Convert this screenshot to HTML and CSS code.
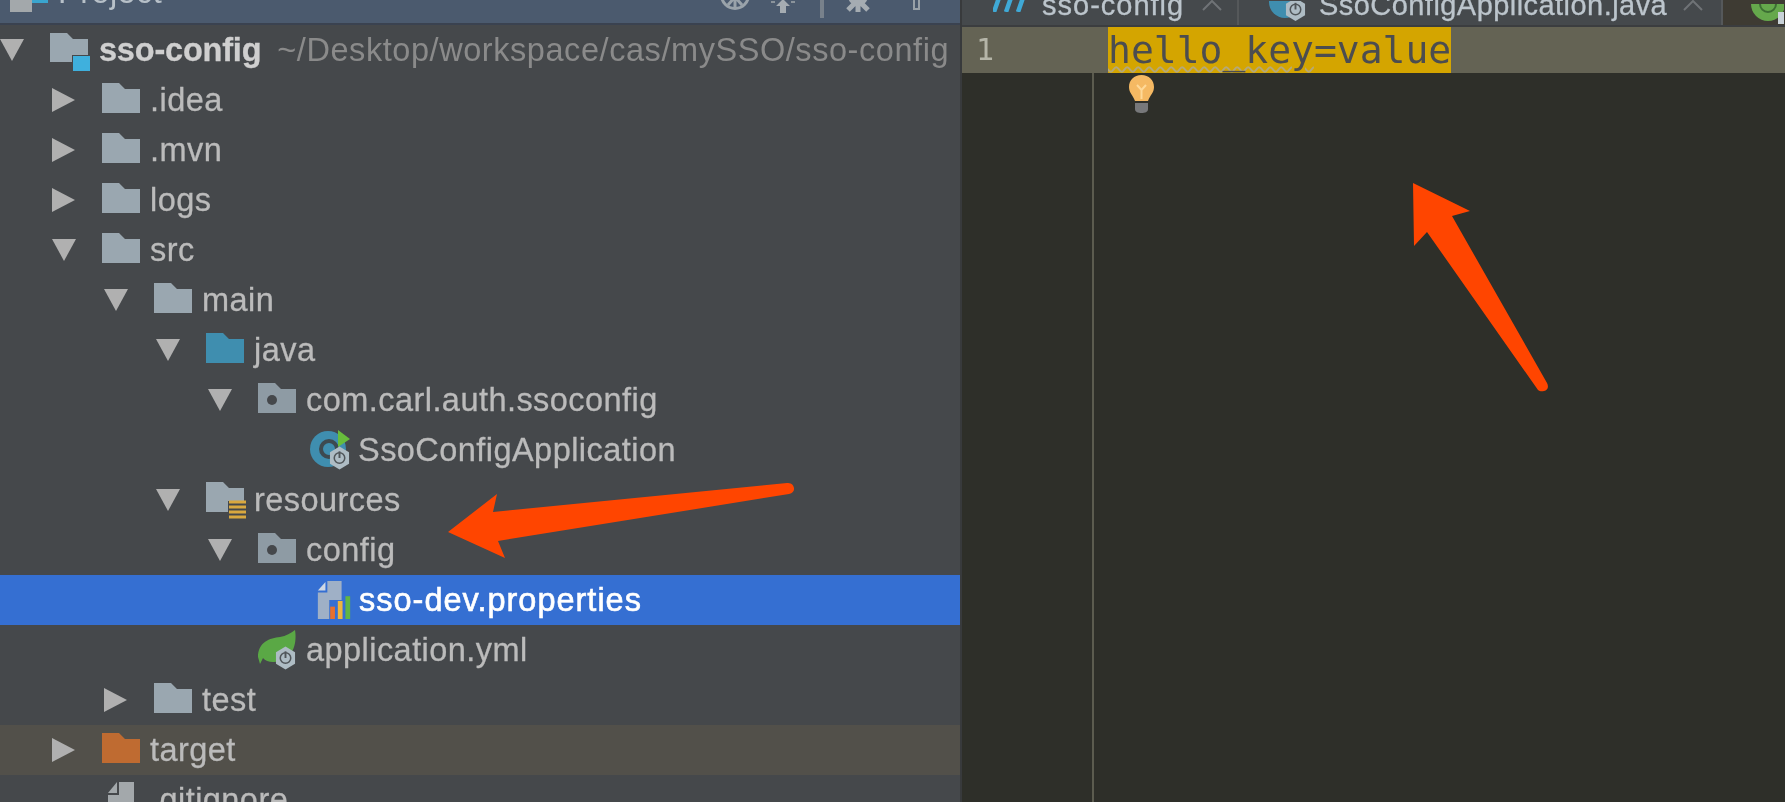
FILE: index.html
```html
<!DOCTYPE html>
<html lang="en">
<head>
<meta charset="utf-8">
<title>sso-config</title>
<link rel="stylesheet" href="styles.css">
</head>
<body>
<svg class="defs" width="0" height="0" aria-hidden="true">
  <defs>
    <symbol id="folder" viewBox="0 0 38 30"><path d="M0 0H17L23 6H38V30H0Z" fill="currentColor"/></symbol>
    <symbol id="right" viewBox="0 0 23 24"><path d="M0 0L23 12L0 24Z" fill="#b0b0b0"/></symbol>
    <symbol id="down" viewBox="0 0 24 22"><path d="M0 0H24L12 22Z" fill="#b0b0b0"/></symbol>
    <symbol id="boot" viewBox="0 0 22 24"><path d="M11 0L21 6V18L11 24L1 18V6Z" fill="#aebcc4"/><circle cx="11" cy="12" r="5.5" fill="none" stroke="#50565a" stroke-width="1.6"/><path d="M11 5V12" stroke="#50565a" stroke-width="2"/></symbol>
  </defs>
</svg>
<div class="app">
  <aside class="sidebar">
    <header class="panel-head">
      <svg class="proj-icon" viewBox="0 0 38 30"><path d="M0 0H22V30H0Z" fill="#a3a8ab"/><path d="M6 8H16M6 15H16" stroke="#555" stroke-width="3"/><path d="M22 17H38V21H22Z" fill="#3aa5cf"/></svg>
      <span class="panel-title">Project</span>
      <span class="head-tools">
        <svg class="tool-target" viewBox="0 0 30 30"><circle cx="15" cy="13" r="13.5" fill="none" stroke="#9aa3aa" stroke-width="3"/><path d="M15 8V27M15 15L8 23M15 15L22 23" stroke="#9aa3aa" stroke-width="3" fill="none"/></svg>
        <svg class="tool-expand" viewBox="0 0 28 22"><path d="M14 8L21 15H17V22H11V15H7Z" fill="#a5acb2"/><path d="M2 11H6M22 11H26" stroke="#8a939b" stroke-width="2"/></svg>
        <span class="tool-sep"></span>
        <svg class="tool-gear" viewBox="0 0 28 22"><circle cx="14" cy="6" r="10" fill="#a5acb2"/><path d="M14 0V22M4 0L24 20M24 0L4 20" stroke="#a5acb2" stroke-width="5"/></svg>
        <span class="tool-pin"></span>
      </span>
    </header>
    <div class="tree">
      <div class="row l0">
        <span class="twisty"><svg class="tw-down"><use href="#down"/></svg></span>
        <span class="icon"><svg class="ic-root" viewBox="0 0 40 38"><path d="M0 0H17L23 6H38V29H0Z" fill="#9aa7b0"/><path d="M22 22H40V38H22Z" fill="#45484b"/><path d="M23 23H40V38H23Z" fill="#3fb0dd"/></svg></span>
        <span class="label strong">sso-config</span><span class="path">~/Desktop/workspace/cas/mySSO/sso-config</span>
      </div>
      <div class="row l1">
        <span class="twisty"><svg class="tw-right"><use href="#right"/></svg></span>
        <span class="icon"><svg class="ic-folder c-grey"><use href="#folder"/></svg></span>
        <span class="label">.idea</span>
      </div>
      <div class="row l1">
        <span class="twisty"><svg class="tw-right"><use href="#right"/></svg></span>
        <span class="icon"><svg class="ic-folder c-grey"><use href="#folder"/></svg></span>
        <span class="label">.mvn</span>
      </div>
      <div class="row l1">
        <span class="twisty"><svg class="tw-right"><use href="#right"/></svg></span>
        <span class="icon"><svg class="ic-folder c-grey"><use href="#folder"/></svg></span>
        <span class="label">logs</span>
      </div>
      <div class="row l1">
        <span class="twisty"><svg class="tw-down"><use href="#down"/></svg></span>
        <span class="icon"><svg class="ic-folder c-grey"><use href="#folder"/></svg></span>
        <span class="label">src</span>
      </div>
      <div class="row l2">
        <span class="twisty"><svg class="tw-down"><use href="#down"/></svg></span>
        <span class="icon"><svg class="ic-folder c-grey"><use href="#folder"/></svg></span>
        <span class="label">main</span>
      </div>
      <div class="row l3">
        <span class="twisty"><svg class="tw-down"><use href="#down"/></svg></span>
        <span class="icon"><svg class="ic-folder c-blue"><use href="#folder"/></svg></span>
        <span class="label">java</span>
      </div>
      <div class="row l4">
        <span class="twisty"><svg class="tw-down"><use href="#down"/></svg></span>
        <span class="icon"><svg class="ic-folder" viewBox="0 0 38 30"><path d="M0 0H17L23 6H38V30H0Z" fill="#8e9ba4"/><circle cx="14" cy="17" r="5" fill="#45484b"/></svg></span>
        <span class="label">com.carl.auth.ssoconfig</span>
      </div>
      <div class="row l5">
        <span class="twisty"></span>
        <span class="icon"><svg class="ic-class" viewBox="0 0 40 40"><circle cx="18" cy="19" r="18" fill="#3f8eaf"/><circle cx="19" cy="19" r="8" fill="none" stroke="#3d4a50" stroke-width="4"/><path d="M28 0L40 9L28 17Z" fill="#68bd3c"/><use href="#boot" x="19" y="16" width="21" height="24"/></svg></span>
        <span class="label">SsoConfigApplication</span>
      </div>
      <div class="row l3">
        <span class="twisty"><svg class="tw-down"><use href="#down"/></svg></span>
        <span class="icon"><svg class="ic-res" viewBox="0 0 40 37"><path d="M0 0H17L23 6H38V30H0Z" fill="#9aa7b0"/><path d="M22 19H40V37H22Z" fill="#45484b"/><path d="M23 20H40M23 25H40M23 30H40M23 35H40" stroke="#d9a83f" stroke-width="3"/></svg></span>
        <span class="label">resources</span>
      </div>
      <div class="row l4">
        <span class="twisty"><svg class="tw-down"><use href="#down"/></svg></span>
        <span class="icon"><svg class="ic-folder" viewBox="0 0 38 30"><path d="M0 0H17L23 6H38V30H0Z" fill="#8e9ba4"/><circle cx="14" cy="17" r="5" fill="#45484b"/></svg></span>
        <span class="label">config</span>
      </div>
      <div class="row l5 selected">
        <span class="twisty"></span>
        <span class="icon"><svg class="ic-props" viewBox="0 0 34 40"><path d="M10 0H25V20H12V40H0V12H10Z" fill="#9fb0c6"/><path d="M8 1V10H0Z" fill="#cfd8e4"/><path d="M13 27H18V40H13Z" fill="#e8702e"/><path d="M21 21H26V40H21Z" fill="#eeb53d"/><path d="M29 16H34V40H29Z" fill="#62b543"/></svg></span>
        <span class="label">sso-dev.properties</span>
      </div>
      <div class="row l4">
        <span class="twisty"></span>
        <span class="icon"><svg class="ic-class" viewBox="0 0 40 40"><path d="M0 27C0 12 12 8 22 7C28 6 33 3 37 0C39 12 36 27 22 31C15 33 8 32 5 28L2 34Z" fill="#5aa845"/><use href="#boot" x="17" y="16" width="21" height="24"/></svg></span>
        <span class="label">application.yml</span>
      </div>
      <div class="row l2">
        <span class="twisty"><svg class="tw-right"><use href="#right"/></svg></span>
        <span class="icon"><svg class="ic-folder c-grey"><use href="#folder"/></svg></span>
        <span class="label">test</span>
      </div>
      <div class="row l1 excluded">
        <span class="twisty"><svg class="tw-right"><use href="#right"/></svg></span>
        <span class="icon"><svg class="ic-folder c-orange"><use href="#folder"/></svg></span>
        <span class="label">target</span>
      </div>
      <div class="row l1">
        <span class="twisty"></span>
        <span class="icon"><svg class="ic-file" viewBox="0 0 26 38"><path d="M11 0H26V38H0V13H11Z" fill="#a3a8ab"/><path d="M9 0V11H0Z" fill="#a3a8ab"/></svg></span>
        <span class="label">.gitignore</span>
      </div>
    </div>
  </aside>
  <main class="main">
    <nav class="tabs">
      <div class="tab tab-first">
        <svg class="tab-m" viewBox="0 0 36 20"><path d="M8 0L1 20M20 0L13 20M32 0L25 20" stroke="#3fa9d6" stroke-width="4.5" fill="none"/></svg>
        <span class="tab-text tab-text-wide">sso-config</span>
        <svg class="tab-x" viewBox="0 0 20 12"><path d="M1 11L10 2L19 11" stroke="#6f7376" stroke-width="2" fill="none"/></svg>
      </div>
      <div class="tab tab-second">
        <svg class="tab-cl" viewBox="0 0 40 20"><circle cx="17" cy="1" r="16" fill="#3f8eaf"/><use href="#boot" x="17" y="-3" width="21" height="23"/></svg>
        <span class="tab-text">SsoConfigApplication.java</span>
        <svg class="tab-x" viewBox="0 0 20 12"><path d="M1 11L10 2L19 11" stroke="#6f7376" stroke-width="2" fill="none"/></svg>
      </div>
      <div class="tab tab-third">
        <svg class="tab-sp" viewBox="0 0 33 20"><circle cx="17" cy="0" r="17" fill="#65a84c"/><circle cx="17" cy="0" r="8" fill="none" stroke="#3c6e33" stroke-width="2"/><path d="M27 8H33V20H27Z" fill="#c9d2d8"/></svg>
      </div>
    </nav>
    <section class="editor">
      <div class="line">
        <span class="num">1</span>
        <code class="code"><span class="warn">hello_key</span>=value</code>
      </div>
      <div class="below">
        <div class="gutter"></div>
        <div class="canvas">
          <svg class="bulb" viewBox="0 0 27 38"><path d="M13.5 0C6 0 1 5 1 12C1 18 5 20 7 26H20C22 20 26 18 26 12C26 5 21 0 13.5 0Z" fill="#f5b963"/><path d="M9 10L13.5 15L18 10M13.5 15V24" stroke="#ffd998" stroke-width="2" fill="none"/><path d="M7 28H20V34C20 37 17 38 13.5 38C10 38 7 37 7 34Z" fill="#77787a"/></svg>
        </div>
      </div>
    </section>
  </main>
</div>
<svg class="overlay" viewBox="0 0 1785 802" aria-hidden="true">
  <path d="M448 532L497 494L493 512L787 483C795 482 797 493 789 494L498 541L505 558Z" fill="#ff4500"/>
  <path d="M1413 183L1470 211L1452 216L1547 383C1551 391 1541 393 1538 390L1427 232L1414 246Z" fill="#ff4500"/>
</svg>
</body>
</html>
```

FILE: styles.css
```css
* { box-sizing: border-box; }
html, body { margin: 0; height: 100%; overflow: hidden; background: #2e2f29; }
body { font-family: "Liberation Sans", Arial, sans-serif; font-size: 32.5px; letter-spacing: .45px; color: #bbbbbb; filter: blur(.7px); }
.defs { position: absolute; }
.app { display: flex; height: 802px; overflow: hidden; }

/* project panel */
.sidebar { flex: 0 0 962px; background: #45484b; border-right: 2px solid #383a3c; overflow: hidden; }
.panel-head { height: 25px; background: #4b5a6e; border-bottom: 2px solid #3a4250; display: flex; align-items: flex-end; overflow: hidden; padding-left: 10px; }
.proj-icon { flex: none; width: 38px; height: 30px; margin-bottom: 11px; }
.panel-title { flex: none; line-height: 38px; height: 38px; margin-left: 10px; margin-bottom: 12px; color: #b7c0c8; }
.head-tools { margin-left: auto; display: flex; align-items: flex-end; padding-right: 40px; }
.tool-target { width: 30px; height: 30px; margin-bottom: 11px; margin-right: -3px; }
.tool-expand { width: 28px; height: 22px; margin-left: 22px; margin-bottom: 10px; }
.tool-sep { width: 4px; height: 24px; margin-left: 23px; margin-bottom: 5px; background: #78818b; }
.tool-gear { width: 28px; height: 22px; margin-left: 20px; margin-bottom: 11px; }
.tool-pin { width: 7px; height: 20px; margin-left: 41px; margin-bottom: 13px; border: 2px solid #99a1a8; }

/* tree */
.row { display: flex; align-items: center; height: 50px; white-space: nowrap; }
.l0 { padding-left: 0; }
.l1 { padding-left: 52px; }
.l2 { padding-left: 104px; }
.l3 { padding-left: 156px; }
.l4 { padding-left: 208px; }
.l5 { padding-left: 260px; }
.twisty { flex: none; width: 50px; display: flex; }
.tw-right { width: 23px; height: 24px; }
.tw-down { width: 24px; height: 22px; }
.icon { flex: none; width: 48px; display: flex; }
.ic-folder { width: 38px; height: 30px; margin-bottom: 4px; }
.ic-root { width: 40px; height: 38px; margin-top: 4px; }
.ic-class { width: 40px; height: 40px; }
.ic-res { width: 40px; height: 37px; }
.ic-props { width: 34px; height: 38px; margin-left: 7px; }
.ic-file { width: 26px; height: 38px; margin-left: 6px; margin-top: 2px; }
.c-grey { color: #9aa7b0; }
.c-blue { color: #3f8eaf; }
.c-orange { color: #bf6b31; }
.label { line-height: 50px; -webkit-text-stroke: .3px currentColor; }
.strong { font-weight: 700; color: #cfcfcf; letter-spacing: -.2px; margin-left: 1px; }
.path { margin-left: 16px; color: #8a8a8a; letter-spacing: .56px; }
.selected { background: #356fd2; color: #ffffff; }
.selected .label { margin-left: 1px; letter-spacing: 1px; -webkit-text-stroke: .6px currentColor; }
.excluded { background: #52504a; }

/* tabs */
.main { flex: 1; min-width: 0; display: flex; flex-direction: column; }
.tabs { flex: none; height: 27px; display: flex; background: #45494c; border-bottom: 2px solid #3b3d3f; overflow: hidden; }
.tab { flex: none; display: flex; align-items: flex-end; height: 25px; border-right: 2px solid #55585a; color: #bcc5cc; overflow: hidden; font-size: 29px; letter-spacing: .45px; }
.tab-first { width: 277px; padding-left: 31px; }
.tab-second { width: 484px; padding-left: 29px; }
.tab-third { flex: 1; background: #3e3b33; padding-left: 28px; border-right: 0; }
.tab-first .tab-x { margin-right: 15px; }
.tab-m { flex: none; width: 36px; height: 20px; margin-bottom: 13px; }
.tab-cl { flex: none; width: 40px; height: 20px; margin-bottom: 4px; }
.tab-sp { flex: none; width: 33px; height: 20px; margin-bottom: 1px; }
.tab-text { flex: none; line-height: 38px; height: 38px; margin-left: 11px; margin-bottom: 1px; -webkit-text-stroke: .3px currentColor; }
.tab-text-wide { margin-left: 13px; letter-spacing: 1px; }
.tab-x { flex: none; width: 20px; height: 12px; margin-left: auto; margin-right: 18px; margin-bottom: 14px; }

/* editor */
.editor { flex: 1; display: flex; flex-direction: column; background: #2e2f29; }
.line { flex: none; height: 46px; display: flex; background: #646354; }
.num { flex: none; width: 146px; padding-left: 14px; font-family: "DejaVu Sans Mono", monospace; font-size: 30px; letter-spacing: 0; line-height: 46px; color: #b5b5a8; }
.code { flex: none; height: 46px; background: #d4a500; color: #4c4d4f; font-family: "DejaVu Sans Mono", monospace; font-size: 38px; letter-spacing: 0; line-height: 46px; }
.warn { text-decoration: underline wavy #b5a878 2px; text-underline-offset: 3px; }
.below { flex: 1; display: flex; }
.gutter { flex: none; width: 132px; border-right: 2px solid #5c5c4f; }
.canvas { flex: 1; padding: 2px 0 0 34px; }
.bulb { display: block; width: 27px; height: 38px; }

/* callout arrows painted over the screenshot */
.overlay { position: absolute; left: 0; top: 0; width: 1785px; height: 802px; pointer-events: none; }
```
